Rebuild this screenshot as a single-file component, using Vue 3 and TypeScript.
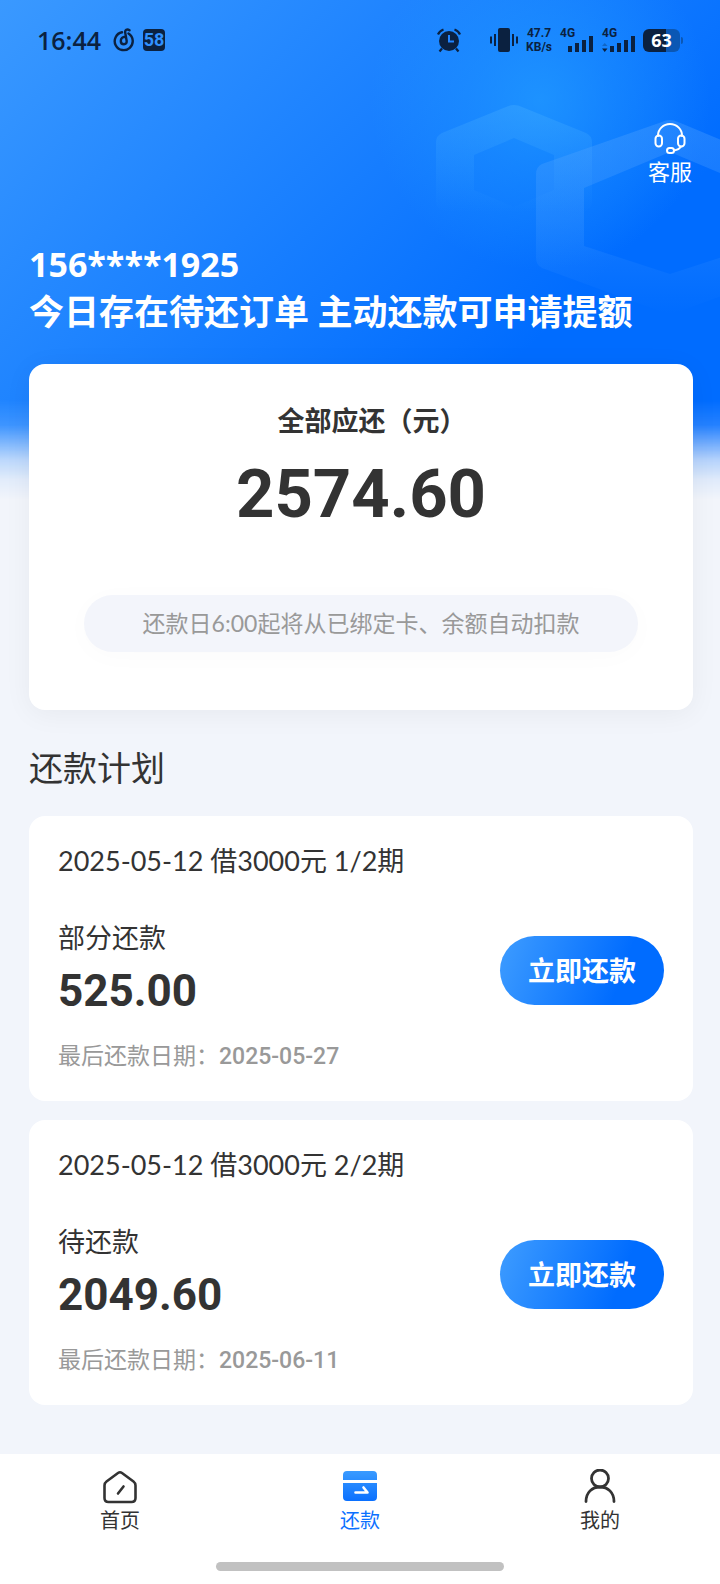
<script setup lang="ts">
interface Plan {
  id: number
  title: string
  status: string
  amount: string
  due: string
}

const plans: Plan[] = [
  { id: 1, title: '2025-05-12 借3000元 1/2期', status: '部分还款', amount: '525.00', due: '2025-05-27' },
  { id: 2, title: '2025-05-12 借3000元 2/2期', status: '待还款', amount: '2049.60', due: '2025-06-11' },
]
</script>

<template>
  <div class="page">
    <div class="backdrop" aria-hidden="true">
      <svg class="hexes" width="300" height="260" viewBox="0 0 300 260">
        <defs>
          <linearGradient id="hexA" x1="0" y1="0" x2="0" y2="1">
            <stop offset="0" stop-color="#4fb4ff" stop-opacity=".3" />
            <stop offset=".8" stop-color="#4fb4ff" stop-opacity="0" />
          </linearGradient>
          <linearGradient id="hexB" x1="0" y1="0" x2="0" y2="1">
            <stop offset="0" stop-color="#5aa8ff" stop-opacity=".32" />
            <stop offset=".5" stop-color="#5aa8ff" stop-opacity=".22" />
            <stop offset="1" stop-color="#5aa8ff" stop-opacity="0" />
          </linearGradient>
        </defs>
        <path fill="url(#hexA)" fill-rule="evenodd" d="M86 27Q94 23 102 27L166 53Q172 56 172 62V122Q172 128 166 131L102 158Q94 161 86 158L22 131Q16 128 16 122V62Q16 56 22 53ZM94 58 54 75V110L94 127 134 110V75Z" />
        <path fill="url(#hexB)" fill-rule="evenodd" d="M242 42Q250 38 258 42L378 92Q384 95 384 102V178Q384 185 378 188L258 232Q250 235 242 232L122 188Q116 185 116 178V94Q116 87 122 84ZM250 72 164 108V166L250 194 336 166V108Z" />
      </svg>
    </div>

    <div class="status">
      <div class="status-left">
        <span class="time">16:44</span>
        <svg width="22" height="24" viewBox="0 0 22 24" fill="none" stroke="#0b2140" stroke-width="2.4" stroke-linecap="round">
          <path d="M9 4.300A9 9 0 1 0 15.500 5.500M16.500 2.300C14 .5 11.800 2 12.200 4.600L13.600 12.500C14 15 12.800 16.300 11 16.300 9.200 16.300 7.800 15 7.800 13 7.800 10.500 9.600 8.700 12.200 8.700" />
        </svg>
        <span class="badge">58</span>
      </div>
      <div class="status-right">
        <svg class="alarm" width="26" height="26" viewBox="0 0 26 26">
          <circle cx="13" cy="14" r="10" fill="#0b2140" />
          <path d="M2 7.500Q3.500 4 7.500 2.500M18.500 2.500Q22.500 4 24 7.500M6 21.500 3.500 24.500M20 21.500 22.500 24.500" fill="none" stroke="#0b2140" stroke-width="2.2" />
          <path d="M13 8V14.500H18" fill="none" stroke="#2184ff" stroke-width="2" />
        </svg>
        <svg width="28" height="24" viewBox="0 0 28 24" fill="#0b2140">
          <rect x="8" y="0" width="12" height="24" rx="2" />
          <path d="M4 6h2v12H4zM0 8.500h2v7H0zM22 6h2v12h-2zM26 8.500h2v7h-2z" />
        </svg>
        <div class="speed"><span>47.7</span><span>KB/s</span></div>
        <div class="signal">
          <span>4G</span>
          <svg class="first" width="26" height="16" viewBox="0 0 26 16" fill="#0b2140"><path d="M0 10h4v6H0zM7 7h4v9H7zM14 4h4v12h-4zM21 0h4v16h-4z" /></svg>
        </div>
        <div class="signal">
          <span>4G</span>
          <svg width="33" height="16" viewBox="0 0 33 16" fill="#0b2140"><path d="M8 10h4v6H8zM15 7h4v9h-4zM22 4h4v12h-4zM29 0h4v16h-4zM0 12.500h5.500L2.750 16z" /><path d="M0 10h5.500L2.750 7z" opacity=".3" /></svg>
        </div>
        <div class="battery"><span>63</span></div>
      </div>
    </div>

    <header class="header">
      <button type="button" class="service">
        <svg width="32" height="32" viewBox="0 0 32 32" fill="none" stroke="#fff" stroke-width="2" stroke-linecap="round">
          <path d="M4 14V13.500A12 11.500 0 0 1 28 13.500V14M27 24.500C25.500 27 23 28 20 28.500" />
          <rect x="1.500" y="13.500" width="6.500" height="11" rx="3.200" />
          <rect x="24" y="13.500" width="6.500" height="11" rx="3.200" />
          <rect x="13" y="26" width="7" height="5" rx="2.500" />
        </svg>
        <span>客服</span>
      </button>
      <div class="phone">156****1925</div>
      <h1>今日存在待还订单 主动还款可申请提额</h1>
    </header>

    <main class="content">
      <section class="summary">
        <h2>全部应还（元）</h2>
        <div class="total">2574.60</div>
        <p class="notice">还款日6:00起将从已绑定卡、余额自动扣款</p>
      </section>

      <h2 class="section-title">还款计划</h2>
      <div class="plans">
        <article v-for="plan in plans" :key="plan.id" class="plan">
          <h3>{{ plan.title }}</h3>
          <div class="plan-body">
            <div>
              <div class="plan-status">{{ plan.status }}</div>
              <div class="plan-amount">{{ plan.amount }}</div>
              <div class="plan-due">最后还款日期：<span>{{ plan.due }}</span></div>
            </div>
            <button type="button" class="pay">立即还款</button>
          </div>
        </article>
      </div>
    </main>

    <nav class="tabbar">
      <div class="tabs">
        <a href="#home" class="tab">
          <svg width="36" height="36" viewBox="0 0 36 36" fill="none" stroke="#333" stroke-width="2.600" stroke-linecap="round" stroke-linejoin="round">
            <path d="M16 4 4.500 12.500Q2.500 14 2.500 16.500V29Q2.500 33 6.500 33H29.500Q33.500 33 33.500 29V16.500Q33.500 14 31.500 12.500L20 4Q18 2.500 16 4ZM21.500 17.500 16 24.500" />
          </svg>
          <span>首页</span>
        </a>
        <a href="#repay" class="tab active" aria-current="page">
          <svg width="36" height="36" viewBox="0 0 36 36">
            <defs>
              <linearGradient id="card" x1="0" y1="0" x2="0" y2="1">
                <stop offset="0" stop-color="#3a9bff" />
                <stop offset="1" stop-color="#0a70ff" />
              </linearGradient>
            </defs>
            <path fill="url(#card)" d="M1 11V6Q1 2 5 2H31Q35 2 35 6V11ZM1 14H35V28Q35 32 31 32H5Q1 32 1 28Z" />
            <path d="M13.500 23.500H25.500L21.500 18.500" fill="none" stroke="#fff" stroke-width="2.600" stroke-linecap="round" stroke-linejoin="round" />
          </svg>
          <span>还款</span>
        </a>
        <a href="#mine" class="tab">
          <svg width="36" height="36" viewBox="0 0 36 36" fill="none" stroke="#333" stroke-width="2.800" stroke-linecap="round">
            <circle cx="18" cy="9.500" r="8.500" />
            <path d="M4 32.500C4 23.500 10 18 18 18S32 23.500 32 32.500" />
          </svg>
          <span>我的</span>
        </a>
      </div>
      <div class="home-indicator"></div>
    </nav>
  </div>
</template>

<style>
body {
  margin: 0;
  background: #f2f5fb;
}
</style>

<style scoped>
.page {
  position: relative;
  display: flex;
  flex-direction: column;
  min-height: 100vh;
  overflow: hidden;
  color: #333;
  background: #f2f5fb;
  font-family: Lato, "Noto Sans CJK SC", sans-serif;
}
h1, h2, h3, p {
  margin: 0;
}
button {
  border: 0;
  padding: 0;
  font-family: inherit;
  color: #fff;
  cursor: pointer;
}
.backdrop {
  position: absolute;
  top: 0;
  left: 0;
  right: 0;
  height: 500px;
  background:
    radial-gradient(circle at 75% 20%, rgba(36, 160, 255, 0.65), rgba(36, 160, 255, 0.35) 70px, rgba(36, 160, 255, 0) 170px),
    linear-gradient(135deg, #3a99ff 0%, #006cff 72%);
  mask-image: linear-gradient(#000 400px, rgba(0, 0, 0, 0.85) 425px, rgba(0, 0, 0, 0.5) 445px, rgba(0, 0, 0, 0.25) 460px, rgba(0, 0, 0, 0.07) 480px, transparent);
}
.hexes {
  position: absolute;
  top: 80px;
  right: 0;
}
.status {
  position: relative;
  display: flex;
  align-items: center;
  justify-content: space-between;
  height: 80px;
  padding: 0 37px;
  color: #0b2140;
}
.status-left {
  display: flex;
  align-items: center;
  gap: 8px;
}
.time {
  margin-right: 4px;
  font-family: "Open Sans", sans-serif;
  font-size: 25px;
  font-weight: 600;
}
.badge {
  width: 22px;
  height: 22px;
  border-radius: 4px;
  background: #0b2140;
  color: #3091ff;
  font: bold 18px/22px Roboto, sans-serif;
  text-align: center;
}
.status-right {
  display: flex;
  align-items: center;
  gap: 8px;
}
.alarm {
  margin-right: 20px;
}
.speed {
  display: flex;
  flex-direction: column;
  font: bold 12px/14px Roboto, sans-serif;
  text-align: center;
}
.signal {
  display: flex;
  flex-direction: column;
  height: 24px;
}
.signal span {
  height: 8px;
  font: bold 12px/10px Roboto, sans-serif;
}
.signal svg {
  display: block;
}
.signal .first {
  margin-left: 8px;
}
.battery {
  position: relative;
  width: 37px;
  height: 23px;
  margin-right: 3px;
  border-radius: 6px;
  background: linear-gradient(90deg, #0b2140 63%, #0b57b4 63%);
  color: #fff;
  font: bold 18px/23px "Open Sans", sans-serif;
  text-align: center;
}
.battery::after {
  content: "";
  position: absolute;
  top: 8px;
  right: -3px;
  width: 2px;
  height: 7px;
  border-radius: 0 2px 2px 0;
  background: #0b57b4;
}
.header {
  position: relative;
  display: flex;
  flex-direction: column;
  padding: 42px 28px 29px 29px;
  color: #fff;
}
.service {
  align-self: flex-end;
  display: flex;
  flex-direction: column;
  align-items: center;
  gap: 3px;
  background: none;
  font-size: 22px;
  line-height: 30px;
}
.phone {
  margin-top: 54px;
  font-family: "Open Sans", sans-serif;
  font-size: 34px;
  font-weight: 700;
  line-height: 46px;
}
h1 {
  font-size: 35px;
  font-weight: 700;
  line-height: 48px;
}
.content {
  position: relative;
  padding: 0 27px 49px 29px;
}
.summary {
  display: flex;
  flex-direction: column;
  padding: 39px 55px 58px;
  border-radius: 16px;
  background: #fff;
  box-shadow: 0 4px 28px rgba(0, 0, 0, 0.05);
  text-align: center;
}
.summary h2 {
  font-size: 27px;
  font-weight: 700;
  line-height: 36px;
  text-indent: 22px;
}
.total {
  margin: 19px 0 65px;
  font: bold 67px/72px Roboto, sans-serif;
}
.notice {
  border-radius: 29px;
  background: #f3f5fb;
  box-shadow: 0 4px 28px rgba(0, 0, 0, 0.02);
  color: #999;
  font-size: 23px;
  line-height: 57px;
}
.section-title {
  margin: 34px 0 24px;
  font-size: 34px;
  font-weight: 400;
  line-height: 48px;
}
.plans {
  display: flex;
  flex-direction: column;
  gap: 19px;
}
.plan {
  padding: 27px 29px 30px;
  border-radius: 16px;
  background: #fff;
}
.plan h3 {
  margin-bottom: 41px;
  font-size: 27px;
  font-weight: 400;
  line-height: 36px;
}
.plan-body {
  display: flex;
  align-items: flex-start;
  justify-content: space-between;
}
.plan-status {
  font-size: 27px;
  line-height: 36px;
}
.plan-amount {
  margin: 9px 0 22px;
  font: bold 44px/52px Roboto, sans-serif;
}
.plan-due {
  display: flex;
  align-items: flex-end;
  color: #999;
  font-size: 23px;
  line-height: 32px;
}
.plan-due span {
  font-family: Roboto, sans-serif;
  font-weight: 500;
  line-height: 28px;
}
.pay {
  margin-top: 16px;
  padding: 0 28px;
  border-radius: 35px;
  background: linear-gradient(110deg, #3a99ff 5%, #006cff 72%);
  font-size: 27px;
  font-weight: 700;
  line-height: 69px;
}
.tabbar {
  position: relative;
  display: flex;
  flex-direction: column;
  align-items: center;
  gap: 28px;
  margin-top: auto;
  padding: 15px 0 13px;
  background: #fff;
}
.tabs {
  display: flex;
  width: 100%;
}
.tab {
  flex: 1;
  display: flex;
  flex-direction: column;
  align-items: center;
  gap: 1px;
  color: #333;
  font-size: 20px;
  line-height: 28px;
  text-decoration: none;
}
.tab.active {
  color: #0a70ff;
}
.home-indicator {
  width: 40%;
  height: 9px;
  border-radius: 5px;
  background: #c1c1c1;
}
</style>
